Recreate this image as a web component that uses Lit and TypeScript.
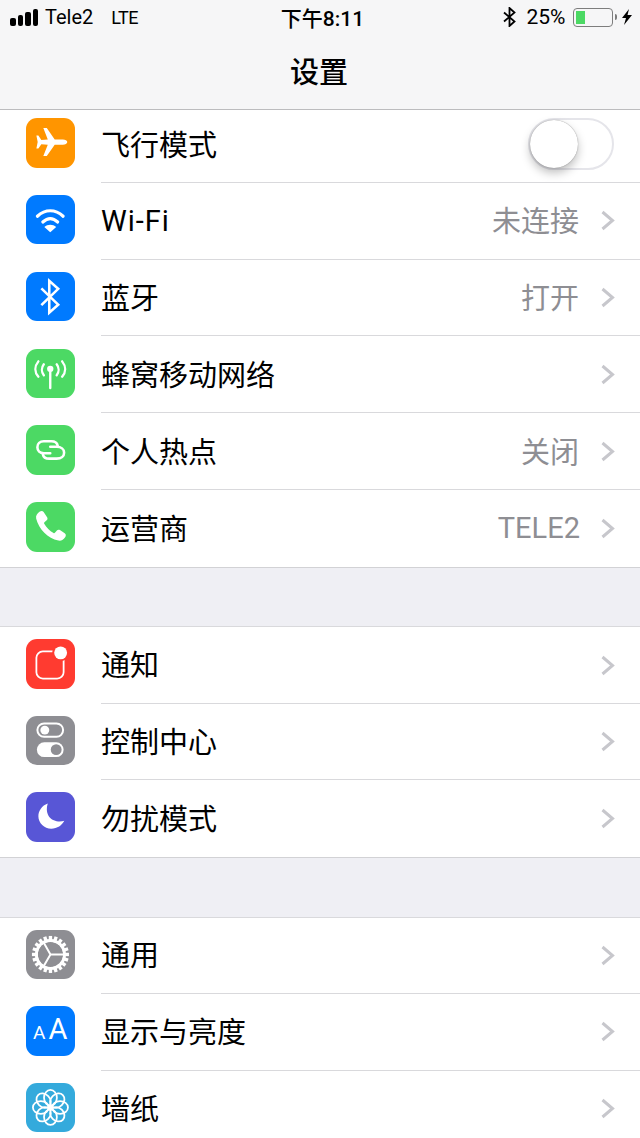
import { LitElement, html, css, svg } from 'lit';
import { customElement } from 'lit/decorators.js';
import { classMap } from 'lit/directives/class-map.js';

type Row = { title: string; color: string; icon: unknown; value?: string; toggle?: boolean };

const gearTeeth = Array.from({ length: 20 }, (_, i) => i * 18);

const icons = {
  plane: svg`<path fill="#fff" d="M41.700 24.300c0-1.500-2-2.600-4.500-2.600H29L21 10h-3.500L22 21.700l-6.500.4-3-4.400h-2l1.300 6.600-1.300 6.600h2l3-4.400 6.500.4-4.500 11.600H21L29 27h8.200c2.500 0 4.500-1.100 4.500-2.700z"/>`,
  wifi: svg`<g fill="none" stroke="#fff" stroke-width="3.200" stroke-linecap="round"><path d="M11.500 21.500c8-7.400 18-7.400 26 0"/><path d="M17 27.300c4.800-4.400 10.200-4.400 15 0"/></g><path fill="#fff" d="M24.500 37.500l-6-5.300c3.500-2.900 8.500-2.900 12 0z"/>`,
  bluetooth: svg`<path fill="none" stroke="#fff" stroke-width="2.600" stroke-linejoin="miter" d="M15.500 16.500l17 16.500-9 8V9l9 8-17 16.500"/>`,
  cellular: svg`<g fill="none" stroke="#fff" stroke-width="2.400" stroke-linecap="round"><path d="M24.500 22v17.500"/><path d="M18 15.500c-2.500 3.200-2.500 7.800 0 11"/><path d="M31 15.500c2.500 3.200 2.500 7.800 0 11"/><path d="M12.500 12.500c-4 5-4 11 0 15.500"/><path d="M36.500 12.500c4 5 4 11 0 15.500"/></g><circle cx="24.500" cy="20" r="3.200" fill="#fff"/>`,
  hotspot: svg`<g fill="none" stroke="#fff" stroke-width="2.600" stroke-linecap="round"><path d="M32 21c-.5-2.800-3-4.500-6.500-4.500H18c-4 0-6.500 2.500-6.500 6s2.500 6 6.500 6h6.500"/><path d="M24.500 22H31c4.500 0 7.500 2.500 7.500 6s-3 6-7.500 6h-7.500c-3.500 0-6-1.700-6.500-4.500"/></g>`,
  phone: svg`<path fill="#fff" d="M14 9.500c1.500-.9 3-.6 3.800.6l3.500 5.300c.7 1.100.5 2.300-.4 3.100l-2.300 2c-.4.400-.5.900-.2 1.400 2.300 4 5.500 7.100 9.400 9.400.5.300 1 .2 1.400-.2l2-2.300c.8-.9 2-1.100 3.100-.4l4.800 3.100c1.200.8 1.500 2.300.6 3.800-1.700 2.800-4.300 4.300-7 3.700-10.600-2.500-19.700-11.600-22.400-22.200-.7-2.900.9-5.600 3.700-7.300z"/>`,
  notify: svg`<rect x="10.500" y="12.500" width="27.500" height="27.500" rx="6.500" fill="none" stroke="#fff" stroke-width="1.800"/><circle cx="35" cy="14" r="8.500" fill="#ff3b30"/><circle cx="35" cy="14" r="6.500" fill="#fff"/>`,
  control: svg`<rect x="11.500" y="7.500" width="26" height="13.500" rx="6.750" fill="none" stroke="#fff" stroke-width="2"/><circle cx="19" cy="14.250" r="4.500" fill="#fff"/><rect x="11" y="26.500" width="27" height="15" rx="7.500" fill="#fff"/><circle cx="30.500" cy="34" r="5.500" fill="#8e8e93"/>`,
  moon: svg`<path fill="#fff" d="M22 11.500c-6 2-9.500 7.500-9.500 13 0 7 6 12.500 13 12.500 6 0 11-3.500 13.200-8-9.500 3-21-3.500-16.700-17.500z"/>`,
  gear: svg`<g fill="#fff">${gearTeeth.map(a => svg`<rect x="23" y="6" width="3.400" height="6" transform="rotate(${a} 24.700 24.700)"/>`)}</g><circle cx="24.700" cy="24.700" r="14.200" fill="none" stroke="#fff" stroke-width="3"/><path d="M24.700 24.700H38M24.700 24.700l-6.600-11.500M24.700 24.700l-6.600 11.500" stroke="#fff" stroke-width="2" fill="none"/>`,
  wallpaper: svg`<g fill="none" stroke="#fff" stroke-width="1.800">${[0, 45, 90, 135, 180, 225, 270, 315].map(a => svg`<ellipse cx="24.700" cy="15" rx="6.500" ry="8" transform="rotate(${a} 24.700 24.700)"/>`)}</g><circle cx="24.700" cy="24.700" r="3" fill="#fff"/>`,
};

const groups: Row[][] = [
  [
    { title: '飞行模式', color: '#ff9500', icon: icons.plane, toggle: true },
    { title: 'Wi-Fi', color: '#007aff', icon: icons.wifi, value: '未连接' },
    { title: '蓝牙', color: '#007aff', icon: icons.bluetooth, value: '打开' },
    { title: '蜂窝移动网络', color: '#4cd964', icon: icons.cellular },
    { title: '个人热点', color: '#4cd964', icon: icons.hotspot, value: '关闭' },
    { title: '运营商', color: '#4cd964', icon: icons.phone, value: 'TELE2' },
  ],
  [
    { title: '通知', color: '#ff3b30', icon: icons.notify },
    { title: '控制中心', color: '#8e8e93', icon: icons.control },
    { title: '勿扰模式', color: '#5856d6', icon: icons.moon },
  ],
  [
    { title: '通用', color: '#8e8e93', icon: icons.gear },
    { title: '显示与亮度', color: '#007aff', icon: html`<span class="aa"><small>A</small>A</span>` },
    { title: '墙纸', color: '#34aadc', icon: icons.wallpaper },
  ],
];

const isLatin = (text: string) => /^[\x00-\x7f]+$/.test(text);

@customElement('app-root')
class AppRoot extends LitElement {
  static styles = css`
    :host {
      display: block;
      width: 640px;
      height: 1138px;
      overflow: hidden;
      background: #efeff4;
      color: #000;
      font-family: Roboto, 'Noto Sans CJK SC', sans-serif;
    }

    .nav {
      position: relative;
      z-index: 1;
      height: 109px;
      background: #f6f6f7;
      border-bottom: 1px solid #bcbcbe;
    }

    .status {
      display: grid;
      grid-template-columns: 1fr auto 1fr;
      align-items: center;
      height: 34px;
      padding: 0 8px 0 10px;
      font-size: 21px;
    }

    .status-left,
    .status-right {
      display: flex;
      align-items: center;
    }

    .status-right {
      justify-content: flex-end;
    }

    .signal {
      display: flex;
      align-items: flex-end;
      gap: 2px;
      height: 17px;
      margin-right: 7px;
    }

    .signal i {
      width: 5.500px;
      border-radius: 2px;
      background: #000;
    }

    .carrier {
      font-size: 20px;
    }

    .lte {
      margin-left: 18px;
      font-size: 18px;
      letter-spacing: -0.5px;
    }

    .clock {
      margin-left: 3px;
      font-size: 21px;
      font-weight: 500;
    }

    .bt {
      margin-right: 11px;
    }

    .battery {
      display: flex;
      align-items: center;
      width: 40px;
      height: 19px;
      box-sizing: border-box;
      margin-left: 7px;
      padding: 2px;
      border: 1px solid #7d7d7d;
      border-radius: 4px;
    }

    .battery i {
      width: 9px;
      height: 100%;
      background: #4cd964;
    }

    .cap {
      width: 2px;
      height: 6px;
      margin: 0 5px 0 2.500px;
      border-radius: 0 2px 2px 0;
      background: #7d7d7d;
    }

    .title {
      margin-top: 11px;
      padding-right: 2px;
      font-size: 29px;
      line-height: 56px;
      font-weight: 500;
      text-align: center;
    }

    .list {
      margin-top: -4px;
    }

    .group {
      margin-bottom: 58.700px;
      background: #fff;
      border-bottom: 1px solid #d2d2d5;
    }

    .group + .group {
      border-top: 1px solid #d9d9dc;
    }

    .group + .group .row {
      height: 76.500px;
    }

    .group + .group .name {
      margin-top: -4px;
    }

    .row {
      display: flex;
      align-items: center;
      height: 76.800px;
      box-sizing: border-box;
      padding-left: 25.500px;
    }

    .badge {
      display: flex;
      flex: none;
      align-items: center;
      justify-content: center;
      width: 49.500px;
      height: 49.500px;
      margin-bottom: 3px;
      border-radius: 11px;
    }

    .badge svg {
      display: block;
      width: 49.500px;
      height: 49.500px;
    }

    .aa {
      color: #fff;
      font-size: 29px;
      line-height: 50px;
    }

    .aa small {
      margin-right: 3px;
      font-size: 19px;
    }

    .body {
      display: flex;
      flex: 1;
      align-items: center;
      align-self: stretch;
      margin-left: 26px;
      padding-right: 25px;
      border-bottom: 1px solid #d9d9dc;
    }

    .row:last-child .body {
      border-bottom: none;
    }

    .name {
      flex: 1;
      margin-top: -2px;
      font-size: 29px;
    }

    .name.latin {
      margin-top: 1px;
      letter-spacing: 1px;
    }

    .value {
      margin-top: -3px;
      margin-right: 22px;
      color: #8e8e93;
      font-size: 29px;
    }

    .value.latin {
      margin-top: 0;
      margin-right: 21px;
    }

    .chevron {
      display: block;
      width: 14px;
      height: 21px;
    }

    .switch {
      position: relative;
      width: 86px;
      height: 52px;
      box-sizing: border-box;
      margin-right: 1px;
      border: 2px solid #e5e5ea;
      border-radius: 26px;
      background: #fff;
    }

    .knob {
      position: absolute;
      top: 0;
      left: 0;
      width: 48px;
      height: 48px;
      border-radius: 50%;
      background: #fff;
      box-shadow: 0 0 1px rgba(0, 0, 0, 0.5), 0 5px 10px rgba(0, 0, 0, 0.25);
    }
  `;

  private _renderRow(row: Row) {
    return html`<div class="row">
      <div class="badge" style="background: ${row.color}">
        ${row.title === '显示与亮度'
          ? row.icon
          : html`<svg viewBox="0 0 50 50">${row.icon}</svg>`}
      </div>
      <div class="body">
        <span class=${classMap({ name: true, latin: isLatin(row.title) })}>${row.title}</span>
        ${row.value
          ? html`<span class=${classMap({ value: true, latin: isLatin(row.value) })}>${row.value}</span>`
          : ''}
        ${row.toggle
          ? html`<div class="switch"><div class="knob"></div></div>`
          : html`<svg class="chevron" viewBox="0 0 14 21">
              <path d="M1.500 2l10 8.500-10 8.500" fill="none" stroke="#c7c7cc" stroke-width="3" />
            </svg>`}
      </div>
    </div>`;
  }

  protected render() {
    return html`<div class="nav">
        <div class="status">
          <div class="status-left">
            <div class="signal">
              <i style="height: 8px"></i>
              <i style="height: 11px"></i>
              <i style="height: 14px"></i>
              <i style="height: 17px"></i>
            </div>
            <span class="carrier">Tele2</span>
            <span class="lte">LTE</span>
          </div>
          <span class="clock">下午8:11</span>
          <div class="status-right">
            <svg class="bt" width="13" height="20" viewBox="0 0 13 20">
              <path d="M1 5.500l10.500 9L6.500 19V1l5 4.500L1 14.500" fill="none" stroke="#000" stroke-width="1.800" />
            </svg>
            <span>25%</span>
            <div class="battery"><i></i></div>
            <div class="cap"></div>
            <svg width="10" height="16" viewBox="0 0 10 16">
              <path d="M7 0L0 9h4l-2 7 8-10H5.500z" fill="#000" />
            </svg>
          </div>
        </div>
        <div class="title">设置</div>
      </div>
      <div class="list">
        ${groups.map(rows => html`<div class="group">${rows.map(row => this._renderRow(row))}</div>`)}
      </div>`;
  }
}
